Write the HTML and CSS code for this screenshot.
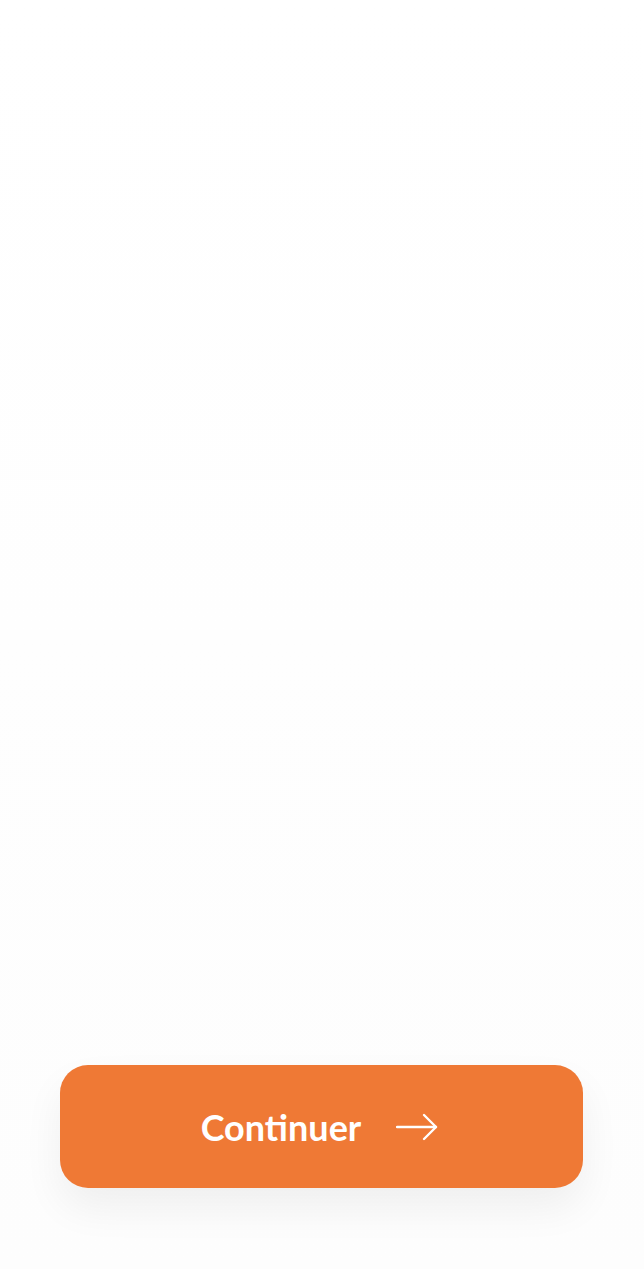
FILE: index.html
```html
<!DOCTYPE html>
<html lang="fr">
<head>
<meta charset="utf-8">
<title>Continuer</title>
<link rel="stylesheet" href="styles.css">
</head>
<body>
<main class="screen">
  <div class="content"></div>
  <footer class="footer">
    <button class="btn-continue" type="button">
      <span class="btn-label">Continuer</span>
      <svg class="btn-arrow" width="42" height="28" viewBox="0 0 42 28" fill="none" stroke="#fff" stroke-width="2.4" stroke-linecap="round" stroke-linejoin="round">
        <path d="M1 14 H40"/>
        <path d="M28 2 L40 14 L28 26"/>
      </svg>
    </button>
  </footer>
</main>
</body>
</html>
```
FILE: styles.css
```css
* { box-sizing: border-box; }
html, body { margin: 0; padding: 0; }
body {
  background: #ffffff;
  font-family: Lato, "Open Sans", "Liberation Sans", sans-serif;
}
.screen {
  width: 644px;
  height: 1269px;
  display: flex;
  flex-direction: column;
  background: linear-gradient(#ffffff, #fdfdfd);
}
.content { flex: 1; }
.footer {
  padding: 0 61px 81px 60px;
}
.btn-continue {
  width: 100%;
  height: 123px;
  border: none;
  border-radius: 28px;
  background: #ef7935;
  color: #ffffff;
  display: flex;
  align-items: center;
  justify-content: center;
  gap: 35px;
  font-family: Lato, "Open Sans", sans-serif;
  font-weight: 700;
  font-size: 36px;
  box-shadow: 0 20px 40px rgba(0, 0, 0, 0.06);
  cursor: pointer;
  padding: 0 4px 0 0;
}
.btn-label { line-height: 1; }
.btn-arrow { display: block; }
```
